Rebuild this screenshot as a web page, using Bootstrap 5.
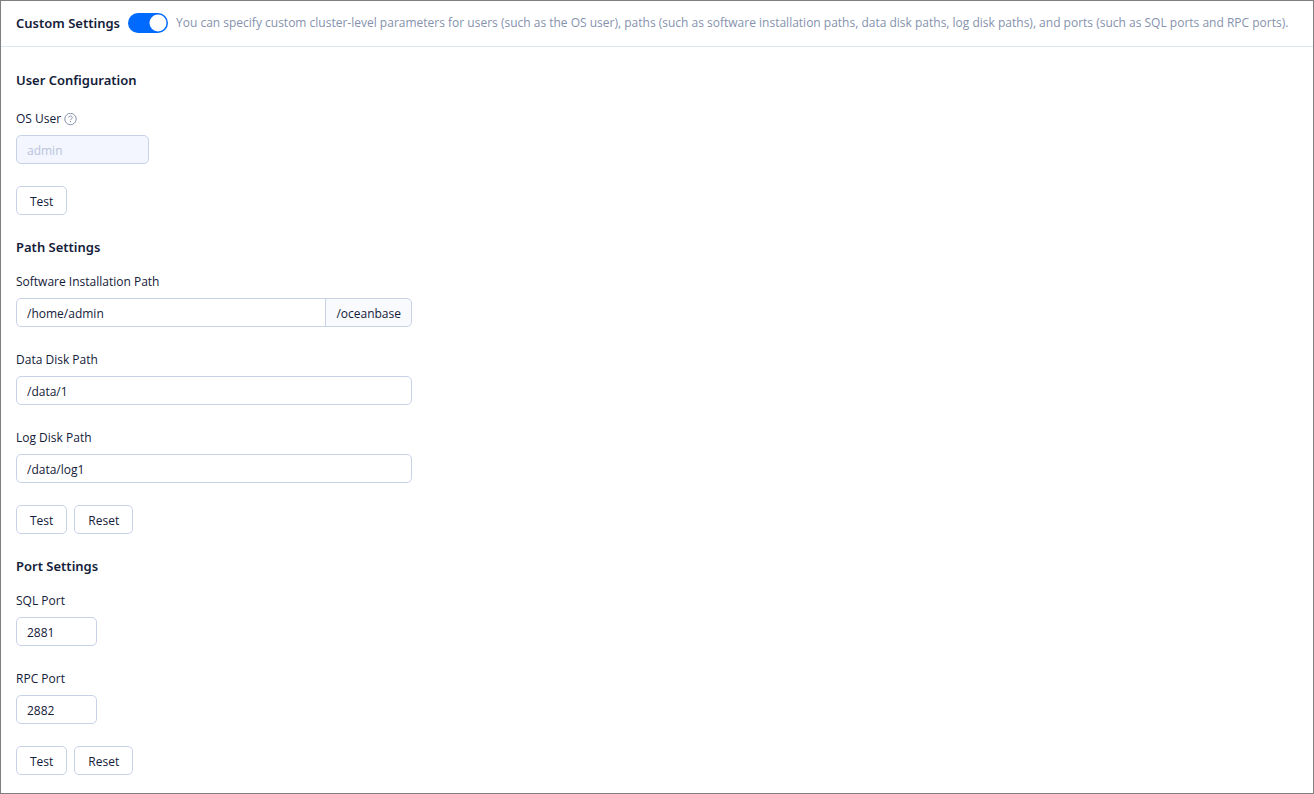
<!DOCTYPE html>
<html lang="en">
<head>
<meta charset="utf-8">
<meta name="viewport" content="width=device-width, initial-scale=1">
<title>Custom Settings</title>
<link rel="stylesheet" href="https://cdn.jsdelivr.net/npm/bootstrap@5.3.0/dist/css/bootstrap.min.css">
<style>
  body { font-family: "Open Sans", "Noto Sans", sans-serif; font-size: 12px; line-height: 20px; color: #132039; }
  .settings-panel { border: 1px solid #7f7f7f; }
  .settings-header { min-height: 46px; padding: 0 15px 1px; gap: 8px; border-bottom: 1px solid #dfe6f0; }
  .settings-body { padding: 23px 15px 17px; }
  .section-title { font-family: "Noto Sans", "Open Sans", sans-serif; font-size: 13px; font-weight: 600; line-height: 20px; margin: 0 0 15px; }
  .section-title.spaced { margin-bottom: 19px; }
  .settings-header .section-title { margin: 0; }
  .hint { color: #8592ad; }
  .setting-section { margin-bottom: 22px; }
  .setting-section:last-child { margin-bottom: 0; }
  .field-stack { display: grid; gap: 23px; max-width: 396px; margin-bottom: 22px; }
  .field-label { display: flex; align-items: center; gap: 3px; width: max-content; margin-bottom: 6px; }
  .field .form-control, .field .input-group-text {
    height: 29px; padding: 2px 10px 0; font-size: 12px; line-height: 20px;
    color: #132039; border-color: #c8d2e7; border-radius: 5px;
  }
  .field .input-group-text { background: #f8fafe; }
  .field .form-control:disabled { color: #b8c3dc; background: #f3f6fe; }
  .user-input { width: 133px; }
  .field .port-input { width: 81px; }
  .button-row { display: flex; gap: 7px; }
  .btn-plain {
    --bs-btn-color: #132039; --bs-btn-bg: #fff; --bs-btn-border-color: #c8d2e7;
    --bs-btn-hover-color: #006aff; --bs-btn-hover-border-color: #006aff;
    --bs-btn-font-size: 12px; --bs-btn-line-height: 20px; --bs-btn-border-radius: 5px;
    height: 29px; padding: 2px 13px 0;
  }
  .form-switch.toggle { padding: 0; margin: 0; min-height: 0; display: flex; }
  .form-switch.toggle .form-check-input {
    width: 40px; height: 20px; margin: 0; border: 0; background-color: #006aff;
    background-size: 20px 20px;
    background-image: url("data:image/svg+xml,%3csvg xmlns='http://www.w3.org/2000/svg' viewBox='0 0 20 20'%3e%3ccircle cx='10' cy='10' r='8.5' fill='%23fff'/%3e%3c/svg%3e");
  }
  .form-switch.toggle .form-check-input:not(:checked) { background-color: #b8c3dc; }
</style>
</head>
<body>
<main class="settings-panel min-vh-100">
  <header class="settings-header d-flex align-items-center">
    <h1 class="section-title flex-shrink-0"><label for="customSwitch">Custom Settings</label></h1>
    <div class="form-check form-switch toggle flex-shrink-0">
      <input class="form-check-input" type="checkbox" role="switch" id="customSwitch" checked>
    </div>
    <span class="hint">You can specify custom cluster-level parameters for users (such as the OS user), paths (such as software installation paths, data disk paths, log disk paths), and ports (such as SQL ports and RPC ports).</span>
  </header>
  <form class="settings-body">
    <section class="setting-section">
      <h2 class="section-title spaced">User Configuration</h2>
      <div class="field-stack">
        <div class="field">
          <label class="field-label" for="osUser">OS User
            <svg width="13" height="13" viewBox="0 0 13 13" fill="none" stroke="#8592ad" aria-hidden="true"><circle cx="6.5" cy="6" r="5.7"/><path d="M4.7 4.7c0-1 .8-1.7 1.8-1.7s1.8.7 1.8 1.6c0 1.3-1.8 1.2-1.8 2.6"/><path d="M6.5 8.1v1.2"/></svg>
          </label>
          <input class="form-control user-input" id="osUser" type="text" value="admin" disabled>
        </div>
      </div>
      <div class="button-row"><button class="btn btn-plain" type="button">Test</button></div>
    </section>
    <section class="setting-section">
      <h2 class="section-title">Path Settings</h2>
      <div class="field-stack">
        <div class="field">
          <label class="field-label" for="installPath">Software Installation Path</label>
          <div class="input-group">
            <input class="form-control" id="installPath" type="text" value="/home/admin">
            <span class="input-group-text">/oceanbase</span>
          </div>
        </div>
        <div class="field">
          <label class="field-label" for="dataPath">Data Disk Path</label>
          <input class="form-control" id="dataPath" type="text" value="/data/1">
        </div>
        <div class="field">
          <label class="field-label" for="logPath">Log Disk Path</label>
          <input class="form-control" id="logPath" type="text" value="/data/log1">
        </div>
      </div>
      <div class="button-row"><button class="btn btn-plain" type="button">Test</button><button class="btn btn-plain" type="button">Reset</button></div>
    </section>
    <section class="setting-section">
      <h2 class="section-title">Port Settings</h2>
      <div class="field-stack">
        <div class="field">
          <label class="field-label" for="sqlPort">SQL Port</label>
          <input class="form-control port-input" id="sqlPort" type="text" inputmode="numeric" value="2881">
        </div>
        <div class="field">
          <label class="field-label" for="rpcPort">RPC Port</label>
          <input class="form-control port-input" id="rpcPort" type="text" inputmode="numeric" value="2882">
        </div>
      </div>
      <div class="button-row"><button class="btn btn-plain" type="button">Test</button><button class="btn btn-plain" type="button">Reset</button></div>
    </section>
  </form>
</main>
<script src="https://cdn.jsdelivr.net/npm/bootstrap@5.3.0/dist/js/bootstrap.bundle.min.js"></script>
</body>
</html>
